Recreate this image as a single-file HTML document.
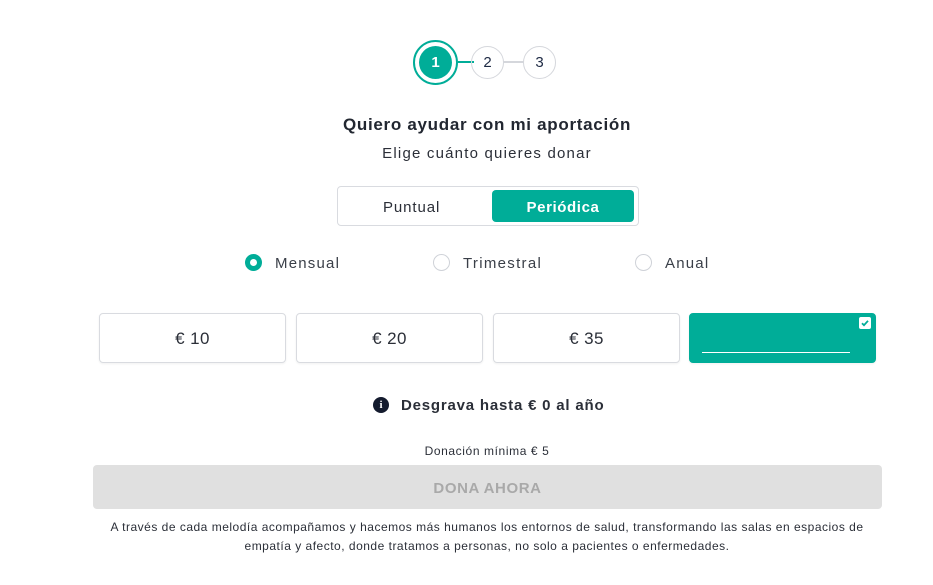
<!DOCTYPE html>
<html><head><meta charset="utf-8"><style>
*{box-sizing:border-box;margin:0;padding:0}
body{width:933px;height:585px;background:#fff;font-family:"Liberation Sans",sans-serif;color:#2b2f38;position:relative;overflow:hidden}
.a{position:absolute}
.c{border-radius:50%;display:flex;align-items:center;justify-content:center;font-size:15px}
.t{text-align:center;left:87px;width:800px}
.box{position:absolute;top:313px;height:50px;width:187px;border:1px solid #d9dbe0;border-radius:4px;display:flex;align-items:center;justify-content:center;font-size:17px;color:#2b2f38;box-shadow:0 1px 2px rgba(0,0,0,.06);padding-top:2px;letter-spacing:.4px}
.r{position:absolute;width:17px;height:17px;border-radius:50%;border:1px solid #cfd2d8;top:254px}
.rl{position:absolute;top:255px;font-size:15px;color:#3a3f48;letter-spacing:1.2px}
</style></head><body>
<div class="a" style="left:458px;top:61px;width:16px;height:2px;background:#00ad98"></div>
<div class="a" style="left:503px;top:61px;width:21px;height:2px;background:#d5d7dc"></div>
<div class="a c" style="left:413px;top:40px;width:45px;height:45px;border:2px solid #00ad98"></div>
<div class="a c" style="left:419px;top:46px;width:33px;height:33px;background:#00ad98;color:#fff;font-weight:bold">1</div>
<div class="a c" style="left:471px;top:46px;width:33px;height:33px;border:1px solid #d5d7dc;color:#1e2a44">2</div>
<div class="a c" style="left:523px;top:46px;width:33px;height:33px;border:1px solid #d5d7dc;color:#1e2a44">3</div>
<div class="a t" style="top:115px;font-size:17px;font-weight:bold;color:#222731;letter-spacing:.7px">Quiero ayudar con mi aportación</div>
<div class="a t" style="top:145px;font-size:15px;color:#2b2f38;letter-spacing:1.2px">Elige cuánto quieres donar</div>
<div class="a" style="left:337px;top:186px;width:302px;height:40px;border:1px solid #d9dbe0;border-radius:4px"></div>
<div class="a" style="left:383px;top:199px;font-size:15px;color:#2b2f38;letter-spacing:.9px">Puntual</div>
<div class="a" style="left:492px;top:190px;width:142px;height:32px;background:#00ad98;border-radius:4px;color:#fff;font-weight:bold;font-size:15px;display:flex;align-items:center;justify-content:center;letter-spacing:.6px;padding-top:2px">Periódica</div>
<div class="r" style="left:245px;border:5px solid #00ad98"></div>
<div class="rl" style="left:275px">Mensual</div>
<div class="r" style="left:433px"></div>
<div class="rl" style="left:463px;letter-spacing:1.3px">Trimestral</div>
<div class="r" style="left:635px"></div>
<div class="rl" style="left:665px">Anual</div>
<div class="box" style="left:99px">€ 10</div>
<div class="box" style="left:296px">€ 20</div>
<div class="box" style="left:493px">€ 35</div>
<div class="box" style="left:689px;background:#00ad98;border-color:#00ad98"></div>
<div class="a" style="left:702px;top:352px;width:148px;height:1px;background:#fff"></div>
<div class="a" style="left:859px;top:317px;width:12px;height:12px;background:#fff;border-radius:2px"><svg width="12" height="12" style="position:absolute;left:0;top:0"><path d="M3 6.2l2 2 4-4.4" stroke="#00ad98" stroke-width="1.8" fill="none"/></svg></div>
<div class="a c" style="left:373px;top:397px;width:16px;height:16px;background:#141b2e;color:#fff;font-size:11px;font-weight:bold;font-family:'Liberation Serif',serif">i</div>
<div class="a" style="left:401px;top:397px;font-size:15px;font-weight:bold;color:#2b2f38;letter-spacing:.8px">Desgrava hasta € 0 al año</div>
<div class="a t" style="top:444px;font-size:12px;color:#2b2f38;letter-spacing:.6px">Donación mínima € 5</div>
<div class="a" style="left:93px;top:465px;width:789px;height:44px;background:#e0e0e0;border-radius:4px;color:#a9a9a9;font-weight:bold;font-size:15px;display:flex;align-items:center;justify-content:center;letter-spacing:.6px;padding-top:2px">DONA AHORA</div>
<div class="a" style="left:97px;top:518px;width:780px;text-align:center;font-size:12px;line-height:19px;color:#2b2f38;letter-spacing:.5px">A través de cada melodía acompañamos y hacemos más humanos los entornos de salud, transformando las salas en espacios de empatía y afecto, donde tratamos a personas, no solo a pacientes o enfermedades.</div>
</body></html>
